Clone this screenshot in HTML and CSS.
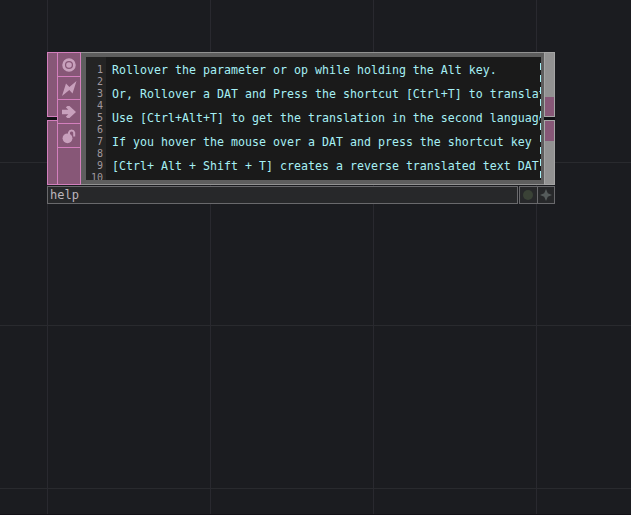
FILE: index.html
```
<!DOCTYPE html>
<html lang="en">
<head>
<meta charset="utf-8">
<title>help</title>
<link rel="stylesheet" href="styles.css">
</head>
<body>
<main class="network">
  <section class="node">
    <div class="viewer">
      <div class="inputs"><i></i><i></i></div>
      <div class="flags">
        <span><svg width="14" height="14" viewBox="0 0 14 14"><circle cx="7" cy="7" r="5.4" fill="none" stroke="#c8a0bc" stroke-width="2.7"/><circle cx="7" cy="7" r="2.8" fill="#c8a0bc"/></svg></span>
        <span><svg width="15" height="15" viewBox="0 0 15 15"><path d="M14.5 0 10.5 12.5 7.3 9 0 15 4 2.5 7.4 6Z" fill="#c8a0bc"/></svg></span>
        <span><svg width="14" height="14" viewBox="0 0 14 14"><path d="M0 4.8h6.3L3.8 2.2 5.5 1H7.5L14 7 7.5 13H5.5L3.8 11.8 6.3 9.2H0Z" fill="#c8a0bc"/></svg></span>
        <span class="lock"><svg width="14" height="16" viewBox="0 0 14 16"><circle cx="5.5" cy="10.3" r="4.9" fill="#c8a0bc"/><path d="M7 7V4.5a2.7 2.7 0 0 1 5.2 0V8.5" fill="none" stroke="#c8a0bc" stroke-width="2"/></svg></span>
        <span></span>
      </div>
      <div class="frame">
        <div class="editor">
          <div class="gutter">1
2
3
4
5
6
7
8
9
10</div>
          <pre class="code">Rollover the parameter or op while holding the Alt key.

Or, Rollover a DAT and Press the shortcut [Ctrl+T] to translate

Use [Ctrl+Alt+T] to get the translation in the second language

If you hover the mouse over a DAT and press the shortcut key

[Ctrl+ Alt + Shift + T] creates a reverse translated text DAT
</pre>
          <div class="margin-line"></div>
        </div>
      </div>
      <div class="outputs"><i class="upper"></i><i class="lower"></i></div>
    </div>
    <footer class="namebar">
      <div class="name">help</div>
      <div class="buttons">
        <span><svg width="12" height="12"><circle cx="6" cy="6" r="5" fill="#3a4236"/></svg></span>
        <span><svg width="12" height="12"><path d="M6 0 7.8 4.2 12 6 7.8 7.8 6 12 4.2 7.8 0 6 4.2 4.2Z" fill="#555b5b"/></svg></span>
      </div>
    </footer>
  </section>
</main>
</body>
</html>
```
FILE: styles.css
```
* { box-sizing: border-box; }
body { margin: 0; background: #1b1c20; }
.network {
  height: 515px;
  overflow: hidden;
  padding: 52px 0 0 47px;
  border-bottom: 1px solid #131117;
  background-color: #1b1c20;
  background-image:
    linear-gradient(90deg, #29292f 1px, transparent 1px),
    linear-gradient(#292a2e 1px, transparent 1px);
  background-size: 163px 163px;
  background-position: 47px 0, 0 162px;
}
.node { width: 508px; }
.viewer { display: flex; height: 133px; }
.inputs, .outputs {
  display: flex;
  flex-direction: column;
  gap: 3px;
  background: #111015;
}
.inputs { width: 10px; }
.inputs i {
  flex: 1;
  background: #875777;
  border: 1px solid #d37fbd;
  border-right: 0;
}
.flags {
  width: 24px;
  display: grid;
  grid-template-rows: 24px 23px 24px 24px 1fr;
  background: #875777;
  border: 1px solid #d37fbd;
}
.flags span {
  display: flex;
  align-items: center;
  justify-content: center;
  border-bottom: 1px solid #d37fbd;
}
.flags span:last-child { border-bottom: 0; }
.flags .lock { padding-right: 1px; }
.frame {
  flex: 1;
  min-width: 0;
  padding: 4px 3px 4px 5px;
  background: #5e5e5e;
  border-top: 1px solid #929292;
  border-bottom: 1px solid #929292;
}
.editor {
  position: relative;
  display: flex;
  height: 123px;
  overflow: hidden;
  background: #1a1a1a;
  font: 11.6px/12px "DejaVu Sans Mono", monospace;
}
.gutter {
  flex: none;
  width: 20px;
  padding: 7px 3px 0 0;
  background: #242424;
  color: #a0989e;
  font-size: 10px;
  text-align: right;
  white-space: pre;
}
.code {
  flex: none;
  width: 435px;
  margin: 0;
  padding: 7px 0 0 6px;
  overflow: hidden;
  color: #a6f0f5;
  font: inherit;
  letter-spacing: 0.017px;
}
.margin-line {
  position: absolute;
  right: 0;
  top: 6px;
  bottom: 0;
  width: 1px;
  background: repeating-linear-gradient(#a6f0f5 0 7px, #1a1a1a 7px 12px);
}
.outputs { width: 11px; }
.outputs i { flex: 1; border: 1px solid #a5a5a5; }
.upper { background: linear-gradient(#929292 44px, #875777 44px); }
.lower { background: linear-gradient(#875777 20px, #929292 20px); }
.namebar {
  display: flex;
  gap: 1px;
  height: 18px;
  margin-top: 1px;
}
.name {
  flex: 1;
  padding-left: 2px;
  background: #27282a;
  border: 1px solid #69696c;
  color: #bcb6bc;
  font: 12px/17px "DejaVu Sans Mono", monospace;
}
.buttons {
  display: flex;
  width: 36px;
  background: #27282a;
  border: 1px solid #69696c;
}
.buttons span {
  flex: 1;
  display: flex;
  align-items: center;
  justify-content: center;
}
.buttons span + span { border-left: 1px solid #69696c; }
```
